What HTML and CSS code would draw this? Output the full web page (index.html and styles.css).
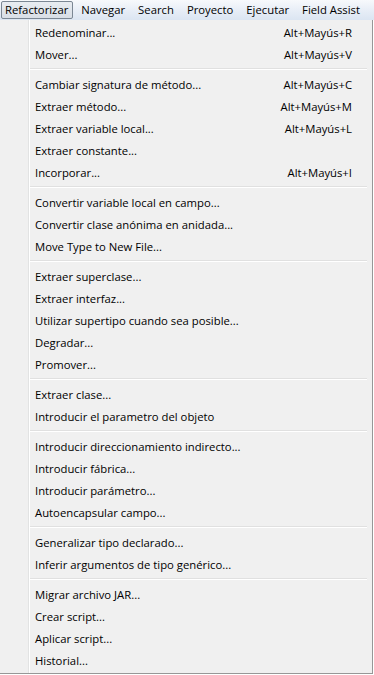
FILE: index.html
```html
<!DOCTYPE html>
<html>
<head>
<meta charset="utf-8">
<link rel="stylesheet" href="styles.css">
</head>
<body>
<div class="menubar">
  <div class="mb-item active">Refactorizar</div>
  <div class="mb-item">Navegar</div>
  <div class="mb-item">Search</div>
  <div class="mb-item">Proyecto</div>
  <div class="mb-item">Ejecutar</div>
  <div class="mb-item">Field Assist</div>
</div>
<div class="dropdown">
  <div class="item"><span>Redenominar...</span><span class="acc">Alt+Mayús+R</span></div>
  <div class="item"><span>Mover...</span><span class="acc">Alt+Mayús+V</span></div>
  <div class="sep"></div>
  <div class="item"><span>Cambiar signatura de método...</span><span class="acc">Alt+Mayús+C</span></div>
  <div class="item"><span>Extraer método...</span><span class="acc">Alt+Mayús+M</span></div>
  <div class="item"><span>Extraer variable local...</span><span class="acc">Alt+Mayús+L</span></div>
  <div class="item"><span>Extraer constante...</span></div>
  <div class="item"><span>Incorporar...</span><span class="acc">Alt+Mayús+I</span></div>
  <div class="sep"></div>
  <div class="item"><span>Convertir variable local en campo...</span></div>
  <div class="item"><span>Convertir clase anónima en anidada...</span></div>
  <div class="item"><span>Move Type to New File...</span></div>
  <div class="sep"></div>
  <div class="item"><span>Extraer superclase...</span></div>
  <div class="item"><span>Extraer interfaz...</span></div>
  <div class="item"><span>Utilizar supertipo cuando sea posible...</span></div>
  <div class="item"><span>Degradar...</span></div>
  <div class="item"><span>Promover...</span></div>
  <div class="sep"></div>
  <div class="item"><span>Extraer clase...</span></div>
  <div class="item"><span>Introducir el parametro del objeto</span></div>
  <div class="sep"></div>
  <div class="item"><span>Introducir direccionamiento indirecto...</span></div>
  <div class="item"><span>Introducir fábrica...</span></div>
  <div class="item"><span>Introducir parámetro...</span></div>
  <div class="item"><span>Autoencapsular campo...</span></div>
  <div class="sep"></div>
  <div class="item"><span>Generalizar tipo declarado...</span></div>
  <div class="item"><span>Inferir argumentos de tipo genérico...</span></div>
  <div class="sep"></div>
  <div class="item"><span>Migrar archivo JAR...</span></div>
  <div class="item"><span>Crear script...</span></div>
  <div class="item"><span>Aplicar script...</span></div>
  <div class="item"><span>Historial...</span></div>
</div>
</body>
</html>
```
FILE: styles.css
```css
html, body {
  margin: 0;
  padding: 0;
  background: #ffffff;
}
body {
  font-family: "Open Sans", "Noto Sans", sans-serif;
  font-size: 11.3px;
  color: #000;
  width: 374px;
  height: 675px;
  overflow: hidden;
}
.menubar {
  height: 20px;
  display: flex;
  align-items: center;
  background: linear-gradient(to bottom, #f7f9fc 0%, #e8eef7 50%, #dbe5f2 100%);
  padding-left: 1px;
  box-sizing: border-box;
  white-space: nowrap;
}
.mb-item {
  flex-shrink: 0;
  height: 18px;
  line-height: 16px;
  padding: 0 5px 0 6px;
  border: 1px solid transparent;
  box-sizing: border-box;
}
.mb-item.active {
  background: linear-gradient(to bottom, #e8ecf1, #d8dee6);
  border-color: #7b8794;
  border-radius: 2px;
  padding: 0 4px 0 3px;
  margin-right: 1px;
}
.dropdown {
  width: 373px;
  height: 654px;
  box-sizing: border-box;
  background-color: #f0f0f0;
  background-image: linear-gradient(to right, transparent 28px, #e2e3e3 28px, #e2e3e3 29px, #ffffff 29px, #ffffff 30px, transparent 30px);
  border-right: 1px solid #979797;
  border-bottom: 1px solid #979797;
  padding-top: 1px;
}
.item {
  height: 22px;
  display: flex;
  justify-content: space-between;
  align-items: center;
  padding-left: 35px;
  padding-right: 20px;
  white-space: nowrap;
}
.acc {
  text-align: right;
}
.sep {
  height: 8px;
  margin-left: 30px;
  margin-right: 5px;
  background: linear-gradient(to bottom, transparent 3px, #e0e0e0 3px, #e0e0e0 4px, #ffffff 4px, #ffffff 5px, transparent 5px);
}
```
